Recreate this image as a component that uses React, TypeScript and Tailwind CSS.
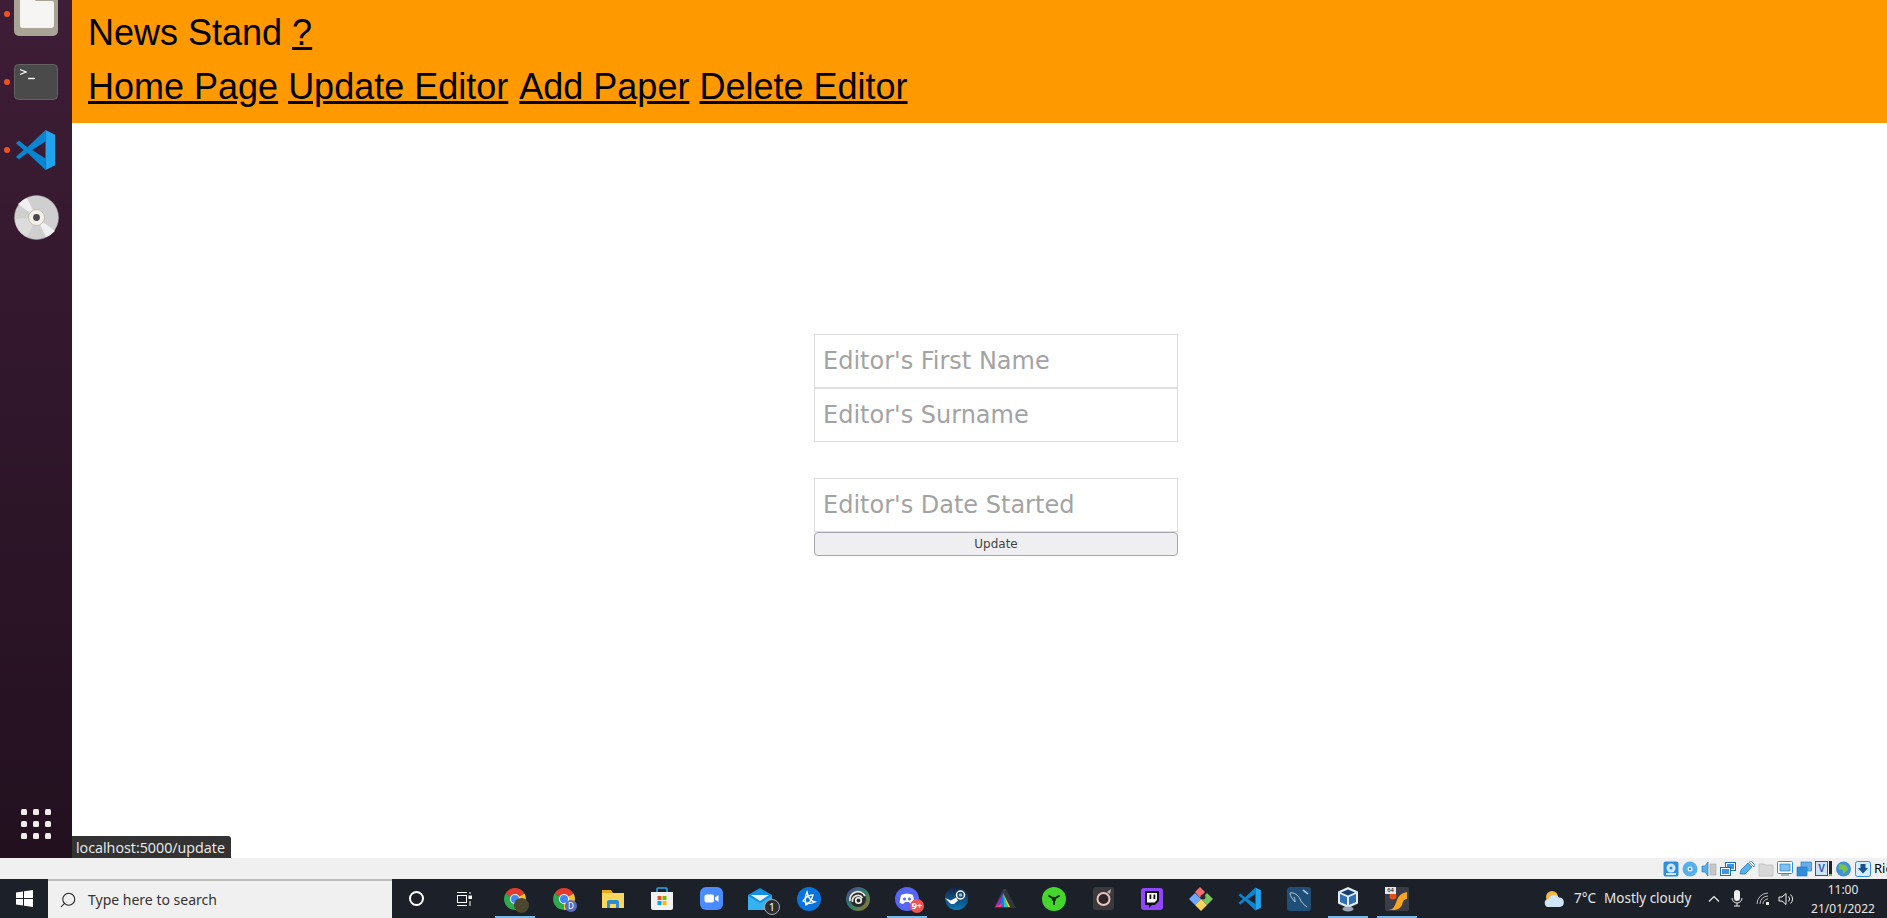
import { ReactNode } from 'react';
import { Search } from 'lucide-react';

function FilesIcon() {
  return (
    <svg width="44" height="37" viewBox="0 0 44 37">
      <rect x="0" y="-8" width="44" height="44" rx="5" fill="#a8a496" />
      <path d="M6 -2h12l4 3h16a2 2 0 0 1 2 2v22a3 3 0 0 1-3 3H9a3 3 0 0 1-3-3z" fill="#f6f5f3" />
    </svg>
  );
}

function TerminalIcon() {
  return (
    <svg width="44" height="36" viewBox="0 0 44 36">
      <rect x="0.500" y="0.500" width="43" height="35" rx="4" fill="#4a4a4a" stroke="#626262" />
      <path d="M6 5.500l6 2.500-6 2.500" fill="none" stroke="#fff" strokeWidth="1.300" />
      <path d="M14 14.500h7" stroke="#fff" strokeWidth="1.400" />
    </svg>
  );
}

function VSCode({ size = 42 }: { size?: number }) {
  return (
    <svg width={size} height={size} viewBox="0 0 44 44">
      <path d="M32 1L13 19 4 12 1 15l8 7-8 7 3 3 9-7 19 18V31L18 22 32 13z" fill="#0a85d1" />
      <path d="M32 1l10 5v32l-10 5z" fill="#20a4ee" />
    </svg>
  );
}

function DiscIcon() {
  return (
    <svg width="45" height="45" viewBox="0 0 45 45">
      <circle cx="22.500" cy="22.500" r="22" fill="#cfcfcf" stroke="#aaa" strokeWidth="0.500" />
      <path d="M22.500 22.500L4 9a22 22 0 0 1 9-6z" fill="#f0f0f0" />
      <path d="M22.500 22.500L41 36a22 22 0 0 1-9 6z" fill="#f0f0f0" />
      <path d="M22.500 22.500L1 24a22 22 0 0 0 12 18z" fill="#dcdcdc" />
      <circle cx="22.500" cy="22.500" r="8" fill="#f4f1ea" stroke="#b5ae9f" strokeWidth="0.700" />
      <circle cx="22.500" cy="22.500" r="3.400" fill="#4a4a4a" />
    </svg>
  );
}

function Sidebar() {
  const dots = Array.from({ length: 9 });
  return (
    <aside className="w-[72px] h-full shrink-0 flex flex-col items-center bg-gradient-to-b from-[#3e1d36] to-[#22101f] relative">
      <div className="h-[37px] flex items-start"><FilesIcon /></div>
      <div className="mt-[27px]"><TerminalIcon /></div>
      <div className="mt-[29px]"><VSCode /></div>
      <div className="mt-[24px]"><DiscIcon /></div>
      <div className="mt-auto mb-[19px] grid grid-cols-3 gap-[6px]">
        {dots.map((_, i) => (
          <div key={i} className="w-[6px] h-[6px] rounded-[1.5px] bg-[#f0ecec]" />
        ))}
      </div>
      <div className="absolute left-[4px] top-[11px] w-[6px] h-[6px] rounded-full bg-[#e95420]" />
      <div className="absolute left-[4px] top-[79px] w-[6px] h-[6px] rounded-full bg-[#e95420]" />
      <div className="absolute left-[4px] top-[147px] w-[6px] h-[6px] rounded-full bg-[#e95420]" />
    </aside>
  );
}

function Field({ placeholder }: { placeholder: string }) {
  return (
    <input
      placeholder={placeholder}
      className="block w-full h-[54px] px-[8px] border border-[#dddddd] bg-white text-[24px] font-['DejaVu_Sans',sans-serif] outline-none placeholder:text-[#a3a3a3]"
    />
  );
}

function Main() {
  return (
    <main className="flex-1 h-full flex flex-col relative bg-white">
      <header className="bg-[#ff9900] h-[123px] pl-4 pt-[6px] text-[36px] leading-[54px] text-black font-['Liberation_Sans',sans-serif]">
        <div>News Stand <a href="#" className="underline">?</a></div>
        <div>
          <a href="#" className="underline">Home Page</a>{' '}
          <a href="#" className="underline">Update Editor</a>{' '}
          <a href="#" className="underline ml-px">Add Paper</a>{' '}
          <a href="#" className="underline">Delete Editor</a>
        </div>
      </header>
      <form className="w-[364px] ml-[742px] mt-[211px]">
        <Field placeholder="Editor's First Name" />
        <Field placeholder="Editor's Surname" />
        <div className="h-[36px]" />
        <Field placeholder="Editor's Date Started" />
        <button
          type="button"
          className="block w-full h-[24px] rounded-[4px] border border-[#a6a6ae] bg-[#efeff1] text-[12px] leading-none text-[#444] font-['DejaVu_Sans',sans-serif]"
        >
          Update
        </button>
      </form>
      <div className="absolute left-0 bottom-0 h-[22px] w-[159px] pl-1 pt-px rounded-tr-[3px] bg-[#333333] text-[14.3px] leading-[22px] text-[#eeeeee] font-['Open_Sans',sans-serif] whitespace-nowrap">
        localhost:5000/update
      </div>
    </main>
  );
}

function StatusIcons() {
  return (
    <div className="h-[21px] bg-[#f0f0f0] flex items-center justify-end gap-[3px] overflow-hidden">
      <svg width="16" height="16" viewBox="0 0 16 16"><rect x="0.500" y="0.500" width="15" height="15" rx="2" fill="#2f8fdc" /><circle cx="8" cy="7" r="4.500" fill="#cfe8fa" /><circle cx="8" cy="7" r="1.500" fill="#2f8fdc" /><rect x="3" y="12" width="10" height="2" fill="#cfe8fa" /></svg>
      <svg width="16" height="16" viewBox="0 0 16 16"><circle cx="8" cy="8" r="7.500" fill="#57b0ee" /><circle cx="8" cy="8" r="2.500" fill="#e8f5fd" /><circle cx="8" cy="8" r="1" fill="#1b6fb5" /></svg>
      <svg width="16" height="16" viewBox="0 0 16 16"><path d="M1 5h3l3-4v14l-3-4H1z" fill="#58aeea" stroke="#1b6fb5" strokeWidth="0.600" /><rect x="9" y="3" width="6" height="11" fill="#c8c8c8" stroke="#999" strokeWidth="0.500" /></svg>
      <svg width="16" height="16" viewBox="0 0 16 16"><rect x="5.500" y="1.500" width="10" height="8" fill="#fff" stroke="#1b6fb5" /><rect x="7" y="3" width="7" height="5" fill="#3b96dd" /><rect x="0.500" y="6.500" width="10" height="8" fill="#fff" stroke="#1b6fb5" /><rect x="2" y="8" width="7" height="5" fill="#3b96dd" /></svg>
      <svg width="16" height="16" viewBox="0 0 16 16"><path d="M1 13l1-4 7-7 4 4-7 7z" fill="#58b0ee" stroke="#1b6fb5" strokeWidth="0.700" /><path d="M10 1l2-1 4 4-1 2z" fill="#e6f3fc" stroke="#1b6fb5" strokeWidth="0.600" /></svg>
      <svg width="16" height="16" viewBox="0 0 16 16"><path d="M1 3h5l1 1h8v11H1z" fill="#d8d8d8" stroke="#c4c4c4" /></svg>
      <svg width="16" height="16" viewBox="0 0 16 16"><rect x="0.500" y="0.500" width="15" height="12" rx="1" fill="#fff" stroke="#2f8fdc" /><rect x="3" y="3" width="10" height="7" fill="#7cc2f2" stroke="#1b6fb5" strokeWidth="0.600" /><rect x="4" y="13" width="8" height="2" fill="#9bb" /></svg>
      <svg width="16" height="16" viewBox="0 0 16 16"><rect x="5" y="1" width="10.500" height="9" fill="#6aaee8" stroke="#1b6fb5" strokeWidth="0.600" /><rect x="1" y="6" width="10" height="9" fill="#2f8fdc" stroke="#1b6fb5" strokeWidth="0.600" /></svg>
      <div className="flex items-center">
        <div className="w-[13px] h-[15px] bg-[#cfe3f5] border border-[#2b57a8] text-[10px] leading-[13px] text-center font-bold text-[#2b57a8] font-['Liberation_Sans',sans-serif]">V</div>
        <div className="w-[3px] h-[15px] ml-[1px] bg-[#222] flex items-end"><div className="w-full h-[2px] bg-[#4ad04a]" /></div>
      </div>
      <svg width="17" height="16" viewBox="0 0 16 16"><circle cx="8" cy="8" r="7.500" fill="#3f90d8" /><path d="M4 3l6 1 3 4-5 5-1-4-4-1z" fill="#7bc24a" /></svg>
      <svg width="16" height="16" viewBox="0 0 16 16"><rect x="0.500" y="0.500" width="15" height="15" rx="2" fill="#d6ecfb" stroke="#2f8fdc" /><path d="M5.500 3h5v4h2.500L8 12.500 3 7h2.500z" fill="#14508f" /></svg>
      <div className="w-[13px] overflow-hidden text-[13px] text-black font-['Noto_Sans',sans-serif]">Rig</div>
    </div>
  );
}

function Slot({ children, open }: { children: ReactNode; open?: boolean }) {
  return (
    <div className="w-[49px] h-full shrink-0 flex items-center justify-center relative">
      {children}
      {open && <div className="absolute bottom-0 left-1/2 -ml-[20px] w-[40px] h-[2px] bg-[#76b9ed]" />}
    </div>
  );
}

function Chrome({ badge }: { badge: ReactNode }) {
  return (
    <div className="relative w-[22px] h-[22px]">
      <svg width="22" height="22" viewBox="0 0 22 22">
        <path d="M11 11L1.500 5.500A11 11 0 0 1 20.500 5.500z" fill="#e33b2e" />
        <path d="M11 11L20.500 5.500A11 11 0 0 1 11 22z" fill="#fbc02d" />
        <path d="M11 11L11 22A11 11 0 0 1 1.500 5.500z" fill="#2da94f" />
        <circle cx="11" cy="11" r="5" fill="#fff" />
        <circle cx="11" cy="11" r="4" fill="#4285f4" />
      </svg>
      {badge}
    </div>
  );
}

function TaskbarApps() {
  return (
    <>
      <Slot open>
        <Chrome badge={<div className="absolute -right-[3px] -bottom-[3px] w-[15px] h-[15px] rounded-full bg-[#4d4630]" />} />
      </Slot>
      <Slot>
        <Chrome badge={<div className="absolute -right-[2px] -bottom-[2px] w-[12px] h-[12px] rounded-full bg-[#5c6bc0] text-[8px] leading-[12px] text-center text-white font-['Noto_Sans',sans-serif]">D</div>} />
      </Slot>
      <Slot>
        <svg width="22" height="18" viewBox="0 0 22 18">
          <path d="M0 0h9l2 3h11v15H0z" fill="#e8a820" />
          <rect x="0" y="3" width="22" height="15" fill="#fbd75b" />
          <path d="M5 18v-6a2 2 0 0 1 2-2h8a2 2 0 0 1 2 2v6h-3v-4H8v4z" fill="#2b8fd8" />
        </svg>
      </Slot>
      <Slot>
        <svg width="24" height="24" viewBox="0 0 24 24">
          <path d="M7 5V2a1 1 0 0 1 1-1h8a1 1 0 0 1 1 1v3" fill="none" stroke="#27a8e0" strokeWidth="1.600" />
          <path d="M1 5h22v16a2 2 0 0 1-2 2H3a2 2 0 0 1-2-2z" fill="#f2f2f2" />
          <rect x="7.500" y="9" width="4" height="4" fill="#f25022" />
          <rect x="12.500" y="9" width="4" height="4" fill="#7fba00" />
          <rect x="7.500" y="14" width="4" height="4" fill="#00a4ef" />
          <rect x="12.500" y="14" width="4" height="4" fill="#ffb900" />
        </svg>
      </Slot>
      <Slot>
        <svg width="23" height="23" viewBox="0 0 23 23">
          <rect width="23" height="23" rx="6" fill="#4a8cff" />
          <rect x="4.500" y="7.500" width="9.500" height="8" rx="2" fill="#fff" />
          <path d="M15 10.500l3.500-2.500v7L15 12.500z" fill="#fff" />
        </svg>
      </Slot>
      <Slot>
        <div className="relative w-[24px] h-[22px]">
          <svg width="24" height="22" viewBox="0 0 24 22">
            <path d="M0 7L12 0l12 7v15H0z" fill="#1390df" />
            <path d="M0 8l12 7 12-7v14H0z" fill="#33b3f3" />
            <path d="M3 7h18l-9 6z" fill="#e8f5fd" />
          </svg>
          <div className="absolute -right-[8px] -bottom-[5px] w-[16px] h-[16px] rounded-full border border-[#aaa] bg-[#2a2d33] text-[11px] leading-[14px] text-center text-white font-['Noto_Sans',sans-serif]">1</div>
        </div>
      </Slot>
      <Slot>
        <svg width="24" height="24" viewBox="0 0 24 24">
          <circle cx="12" cy="12" r="12" fill="#0a74da" />
          <path d="M10 5c1 5 3 9 8 10-4 2-9 1-12-1 2-3 6-6 10-6-1 4-3 8-7 10-1-4-1-9 1-13z" fill="none" stroke="#fff" strokeWidth="1.300" />
        </svg>
      </Slot>
      <Slot>
        <svg width="24" height="24" viewBox="0 0 24 24">
          <defs>
            <linearGradient id="uplayRing" x1="0" y1="0" x2="1" y2="1">
              <stop offset="0" stopColor="#5b3f8f" />
              <stop offset="0.500" stopColor="#2e7f6a" />
              <stop offset="1" stopColor="#a8752e" />
            </linearGradient>
          </defs>
          <circle cx="12" cy="12" r="12" fill="url(#uplayRing)" />
          <circle cx="12" cy="12" r="8" fill="#2a2a2c" />
          <path d="M4 14a8 8 0 0 1 15-5M6.500 15a5.500 5.500 0 0 1 10-4" fill="none" stroke="#e6e6de" strokeWidth="1.800" />
          <circle cx="12.500" cy="13.500" r="2.800" fill="none" stroke="#f4f4ee" strokeWidth="1.600" />
        </svg>
      </Slot>
      <Slot open>
        <div className="relative w-[24px] h-[24px]">
          <svg width="24" height="24" viewBox="0 0 24 24">
            <circle cx="12" cy="12" r="12" fill="#5865f2" />
            <path d="M6 8c4-2 8-2 12 0l1.500 7.500c-2 1.500-3.500 1.500-4.500 1l-1-1.500h-4L9 16.500c-1 .5-2.500 .5-4.500-1z" fill="#fff" />
            <circle cx="9.500" cy="12" r="1.500" fill="#5865f2" />
            <circle cx="14.500" cy="12" r="1.500" fill="#5865f2" />
          </svg>
          <div className="absolute -right-[5px] -bottom-[2px] w-[14px] h-[14px] rounded-full bg-[#ed5555] text-[9px] leading-[14px] text-center font-bold text-white font-['Noto_Sans',sans-serif]">9+</div>
        </div>
      </Slot>
      <Slot>
        <svg width="23" height="23" viewBox="0 0 23 23">
          <defs>
            <linearGradient id="steamBg" x1="0" y1="0" x2="0" y2="1">
              <stop offset="0" stopColor="#12224a" />
              <stop offset="1" stopColor="#0c78b0" />
            </linearGradient>
          </defs>
          <circle cx="11.500" cy="11.500" r="11.500" fill="url(#steamBg)" />
          <path d="M0 11l6 2.500 5-3 2 3-4 3.500-3 0z" fill="#fff" />
          <circle cx="15.500" cy="8" r="4" fill="none" stroke="#fff" strokeWidth="1.500" />
          <circle cx="15.500" cy="8" r="1.800" fill="#9fb8cc" />
        </svg>
      </Slot>
      <Slot>
        <svg width="22" height="19" viewBox="0 0 22 19">
          <path d="M9 0L0 19h22L12 0z" fill="#33373f" />
          <path d="M9 4l-8 14h4z" fill="#a126c9" />
          <path d="M9 4L5 18h5z" fill="#1e6fe5" />
          <path d="M9 4l1 14h4z" fill="#22c7c0" />
          <path d="M9 4l5 14h2z" fill="#ffdc00" />
          <path d="M1 18h6l2-4z" fill="#ff3b6b" />
        </svg>
      </Slot>
      <Slot>
        <svg width="24" height="24" viewBox="0 0 24 24">
          <circle cx="12" cy="12" r="12" fill="#44d62c" />
          <circle cx="12" cy="12" r="2.200" fill="#14261a" />
          <path d="M12 12L6.500 8.500M12 12l5.500-3.500M12 12v6" stroke="#14261a" strokeWidth="2" />
        </svg>
      </Slot>
      <Slot>
        <svg width="21" height="23" viewBox="0 0 21 23">
          <rect width="21" height="23" rx="3" fill="#3b3a3a" />
          <circle cx="10.500" cy="12" r="6" fill="#2d2627" stroke="#e8c5c2" strokeWidth="2" />
          <path d="M14 5l4-3-1 5z" fill="#c8b0ae" />
        </svg>
      </Slot>
      <Slot>
        <svg width="22" height="22" viewBox="0 0 22 22">
          <rect width="22" height="22" rx="3" fill="#9146ff" />
          <path d="M4 3h14v10l-4 4h-3l-3 3v-3H4z" fill="#111" />
          <path d="M6 5h10v7l-2.500 2.500H6z" fill="#fff" />
          <rect x="8.500" y="6.500" width="1.800" height="4.500" fill="#111" />
          <rect x="12.500" y="6.500" width="1.800" height="4.500" fill="#111" />
        </svg>
      </Slot>
      <Slot>
        <svg width="24" height="24" viewBox="0 0 24 24">
          <path d="M0 12l6-6 6 6-6 6z" fill="#6da7ff" />
          <path d="M6 5l5-5 5 5-5 6z" fill="#f26d6d" />
          <path d="M12 12l6-6 6 6-6 6z" fill="#79c25c" />
          <path d="M6 18l6-6 6 6-6 6z" fill="#f4d35e" />
          <circle cx="14" cy="10" r="2.500" fill="#26292f" />
        </svg>
      </Slot>
      <Slot>
        <VSCode size={24} />
      </Slot>
      <Slot>
        <svg width="24" height="24" viewBox="0 0 24 24">
          <rect width="24" height="24" rx="3" fill="#1f4e79" />
          <path d="M3 6c4-1 8 2 10 6 1 3 4 6 7 8M3 6c0 4 3 6 5 9 0-2 0-3-1-5" fill="none" stroke="#c9d6df" strokeWidth="0.900" />
          <path d="M16 3l5 4" stroke="#c9d6df" strokeWidth="1.600" />
        </svg>
      </Slot>
      <Slot open>
        <svg width="22" height="26" viewBox="0 0 22 26">
          <path d="M11 1l10 4.500v12L11 22 1 17.500v-12z" fill="#e4ecf5" />
          <path d="M11 3.500l7 3-7 3-7-3z" fill="#173e70" />
          <path d="M3 8l7 3v8l-7-3zM19 8l-7 3v8l7-3z" fill="#2f6db5" />
          <ellipse cx="11" cy="23" rx="5.500" ry="2.500" fill="#9aa6b4" />
        </svg>
      </Slot>
      <Slot open>
        <div className="relative w-[24px] h-[24px] rounded-[2px] bg-[#3a3d47]">
          <svg width="24" height="24" viewBox="0 0 24 24">
            <path d="M3 23c6 0 7-5 9-10s5-7 10-8v7c-4 .5-4 3-5 6s-5 5-9 5z" fill="#f5a623" />
            <circle cx="8" cy="9" r="3.500" fill="#e2521d" />
          </svg>
          <div className="absolute left-0 top-0 w-[11px] h-[7px] bg-[#e8e8e8] text-[6px] leading-[7px] text-center text-black font-['Liberation_Sans',sans-serif]">64</div>
        </div>
      </Slot>
    </>
  );
}

function Tray() {
  return (
    <div className="flex-1 h-full flex items-center whitespace-nowrap text-[#e6e6e6] font-['Noto_Sans',sans-serif] text-[13.5px]">
      <svg className="ml-[122.500px] shrink-0" width="21" height="16" viewBox="0 0 21 16">
        <circle cx="8" cy="6" r="6" fill="#f4b942" />
        <path d="M5 16a4 4 0 0 1-.500-8A6 6 0 0 1 15 6.500 4.800 4.800 0 0 1 16 16z" fill="#cfe6f7" />
      </svg>
      <span className="ml-[9px] w-[30px]">7°C</span>
      <span className="w-[87px]">Mostly cloudy</span>
      <svg className="ml-[17px] shrink-0" width="12" height="7" viewBox="0 0 12 7"><path d="M1 6.500l5-5 5 5" fill="none" stroke="#eee" strokeWidth="1.200" /></svg>
      <svg className="ml-[11px] shrink-0" width="12" height="17" viewBox="0 0 12 17"><rect x="3" y="0" width="6" height="11" rx="3" fill="#eee" /><path d="M1 8a5 5 0 0 0 10 0M6 13v3M3 16h6" fill="none" stroke="#eee" /></svg>
      <svg className="ml-[13px] shrink-0" width="15" height="14" viewBox="0 0 15 14"><path d="M1 12a11 11 0 0 1 11-11M4 12a8 8 0 0 1 8-8M7 12a5 5 0 0 1 5-5" fill="none" stroke="#bbb" /><rect x="10" y="10" width="3" height="3" fill="#eee" /></svg>
      <svg className="ml-[7px] shrink-0" width="16" height="14" viewBox="0 0 16 14"><path d="M1 5h3l4-3.500v11L4 9H1z" fill="none" stroke="#eee" /><path d="M10.500 4.500a3.500 3.500 0 0 1 0 5M12.500 2.500a6 6 0 0 1 0 9" fill="none" stroke="#eee" /></svg>
      <div className="ml-[14px] w-[70px] text-center text-[12px] leading-[19px]">
        <div>11:00</div>
        <div>21/01/2022</div>
      </div>
      <svg className="ml-[14px] shrink-0" width="9" height="16" viewBox="0 0 9 16"><path d="M0 1h9v11H4l-3 3v-3H0z" fill="#fff" /><path d="M2 4h7M2 6.500h7M2 9h7" stroke="#333" /></svg>
    </div>
  );
}

function Taskbar() {
  return (
    <div className="h-[39px] flex items-center bg-[#1c2028] overflow-hidden">
      <div className="w-[48px] h-full flex items-center justify-center shrink-0">
        <svg width="17" height="17" viewBox="0 0 17 17">
          <path d="M0 2.400L7 1.400v6.600H0zM8 1.300L17 0v8H8zM0 9h7v6.600L0 14.600zM8 9h9v8l-9-1.300z" fill="#fff" />
        </svg>
      </div>
      <div className="w-[344px] h-full shrink-0 flex items-center bg-[#f0f0f0] border-t-2 border-[#bdbdbd] pl-[11px] font-['Noto_Sans',sans-serif] text-[14px] text-[#333]">
        <Search size={18} strokeWidth={1.400} className="-scale-x-100 text-[#222]" />
        <span className="ml-[11px]">Type here to search</span>
      </div>
      <div className="w-[48px] h-full shrink-0 flex items-center justify-center">
        <div className="w-[15px] h-[15px] rounded-full border-2 border-white" />
      </div>
      <div className="w-[48px] h-full shrink-0 flex items-center justify-center">
        <svg width="16" height="16" viewBox="0 0 16 16" fill="none" stroke="#fff" strokeWidth="1">
          <path d="M1 1.500h10M1 14.500h10" />
          <rect x="1.500" y="4.500" width="9" height="7" />
          <rect x="13" y="5" width="2.500" height="2.500" fill="#fff" />
          <path d="M14 1v2M14 10v5" />
        </svg>
      </div>
      <div className="w-[2.500px] shrink-0" />
      <TaskbarApps />
      <Tray />
    </div>
  );
}

export default function App() {
  return (
    <div className="w-[1887px] h-[918px] flex flex-col overflow-hidden">
      <div className="h-[858px] flex">
        <Sidebar />
        <Main />
      </div>
      <StatusIcons />
      <Taskbar />
    </div>
  );
}
